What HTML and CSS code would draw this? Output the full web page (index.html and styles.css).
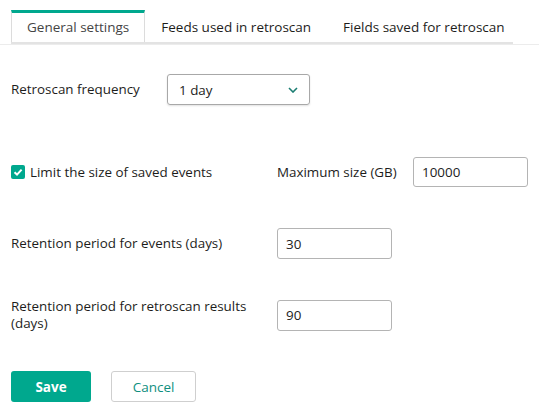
FILE: index.html
```
<!DOCTYPE html>
<html>
<head>
<meta charset="utf-8">
<link rel="stylesheet" href="styles.css">
</head>
<body>
<div class="tabbar">
  <div class="tabs">
    <div class="tab active">General settings</div>
    <div class="tab">Feeds used in retroscan</div>
    <div class="tab">Fields saved for retroscan</div>
  </div>
</div>
<div class="form">
  <div class="row row-freq">
    <div class="label label-freq">Retroscan frequency</div>
    <div class="select">
      <span>1 day</span>
      <svg class="chev" width="10" height="6" viewBox="0 0 10 6"><path d="M1 1 L5 5 L9 1" fill="none" stroke="#1b7d72" stroke-width="1.6"/></svg>
    </div>
  </div>
  <div class="row row-limit">
    <label class="check-label">
      <span class="check"><svg width="14" height="14" viewBox="0 0 14 14"><path d="M3.5 7.3 L6 9.6 L10.6 4.6" fill="none" stroke="#fff" stroke-width="2"/></svg></span>
      <span>Limit the size of saved events</span>
    </label>
    <div class="label label-max">Maximum size (GB)</div>
    <div class="input input-max">10000</div>
  </div>
  <div class="row row-ret1">
    <div class="label label-wide">Retention period for events (days)</div>
    <div class="input">30</div>
  </div>
  <div class="row row-ret2">
    <div class="label label-wide">Retention period for retroscan results<br>(days)</div>
    <div class="input">90</div>
  </div>
  <div class="buttons">
    <button class="btn btn-save">Save</button>
    <button class="btn btn-cancel">Cancel</button>
  </div>
</div>
</body>
</html>
```
FILE: styles.css
```
html, body {
  margin: 0;
  padding: 0;
  background: #fff;
}
body {
  font-family: "Open Sans", "Noto Sans", sans-serif;
  font-size: 13.4px;
  color: #1d1d1b;
}
.tabbar {
  padding-top: 10px;
  border-bottom: 1px solid #ececec;
}
.tabs {
  display: flex;
  width: 502px;
  margin-left: 11px;
  border-bottom: 2px solid #e3e3e3;
  height: 32px;
}
.tab {
  padding: 0 16px;
  line-height: 34px;
  height: 32px;
  white-space: nowrap;
  color: #1d1d1b;
  font-size: 13.5px;
}
.tab.active {
  border-top: 3px solid #00a88e;
  border-left: 1px solid #dcdcdc;
  border-right: 1px solid #dcdcdc;
  height: 29px;
  line-height: 29px;
  padding: 0 15px;
  color: #444;
}
.form {
  padding: 29px 11px 0 11px;
}
.row {
  display: flex;
  align-items: center;
}
.label {
  line-height: 17px;
}
.label-freq {
  width: 156px;
}
.label-wide {
  width: 266px;
}
.select {
  display: flex;
  align-items: center;
  justify-content: space-between;
  padding: 0 11px 0 11px;
  box-sizing: border-box;
  width: 143px;
  height: 31px;
  border: 1px solid #a8a8a8;
  border-radius: 3px;
  box-shadow: 0 1px 2px rgba(0,0,0,0.12);
}
.row-limit {
  margin-top: 52px;
}
.check-label {
  display: flex;
  align-items: center;
  width: 266px;
}
.check {
  width: 14px;
  height: 14px;
  border-radius: 2px;
  background: #00a88e;
  margin-right: 5px;
  display: flex;
}
.label-max {
  width: 136px;
}
.input {
  box-sizing: border-box;
  width: 115px;
  height: 31px;
  border: 1px solid #b4b4b4;
  border-radius: 3px;
  padding: 0 8px;
  display: flex;
  align-items: center;
  color: #222;
}
.input-max {
  height: 30px;
}
.row-ret1 {
  margin-top: 41px;
}
.row-ret2 {
  margin-top: 39px;
}
.buttons {
  display: flex;
  margin-top: 39px;
  gap: 20px;
}
.btn {
  font-family: "Open Sans", "Noto Sans", sans-serif;
  font-size: 13.5px;
  height: 31px;
  border-radius: 3px;
  box-sizing: border-box;
  cursor: pointer;
}
.btn-save {
  width: 80px;
  background: #00a88e;
  border: none;
  color: #fff;
  font-weight: 700;
}
.btn-cancel {
  width: 85px;
  background: #fff;
  border: 1px solid #cfcfcf;
  color: #0f8f7f;
}
```
